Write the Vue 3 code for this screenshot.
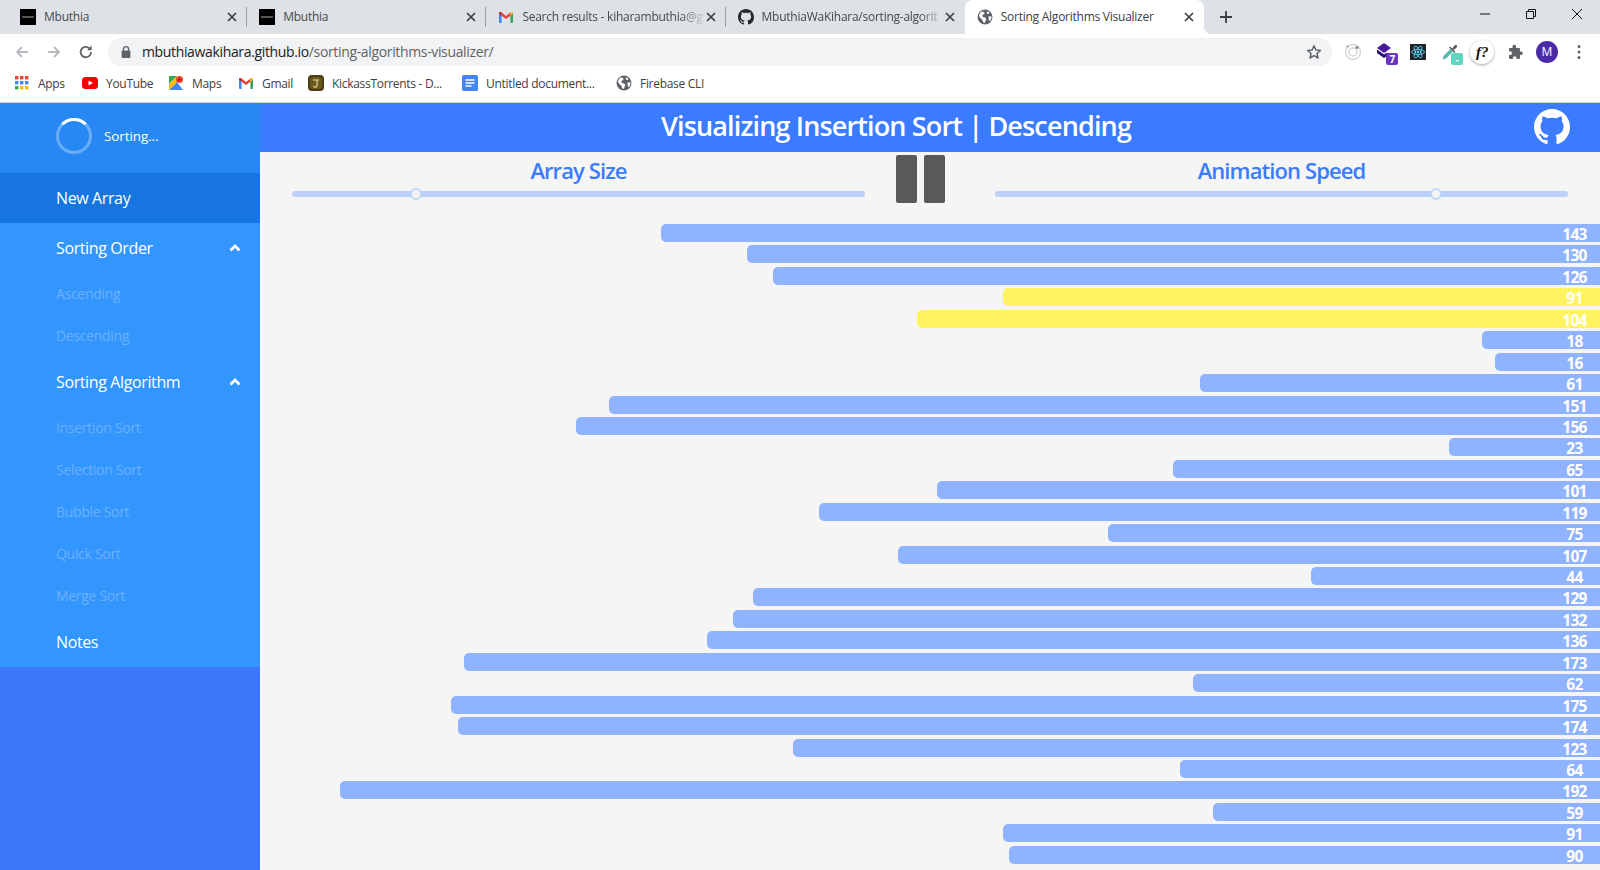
<script setup>
const values = [143,130,126,91,104,18,16,61,151,156,23,65,101,119,75,107,44,129,132,136,173,62,175,174,123,64,192,59,91,90]
const bars = values.map((value, i) => ({ value, active: i === 3 || i === 4, width: value * 6.565 + 'px' }))
const orders = ['Ascending', 'Descending']
const algorithms = ['Insertion Sort', 'Selection Sort', 'Bubble Sort', 'Quick Sort', 'Merge Sort']
const octicon = 'M8 0C3.58 0 0 3.58 0 8c0 3.54 2.29 6.53 5.47 7.59.4.07.55-.17.55-.38 0-.19-.01-.82-.01-1.49-2.01.37-2.53-.49-2.69-.94-.09-.23-.48-.94-.82-1.13-.28-.15-.68-.52-.01-.53.63-.01 1.08.58 1.23.82.72 1.21 1.87.87 2.33.66.07-.52.28-.87.51-1.07-1.78-.2-3.64-.89-3.64-3.95 0-.87.31-1.59.82-2.15-.08-.2-.36-1.02.08-2.12 0 0 .67-.21 2.2.82.64-.18 1.32-.27 2-.27.68 0 1.36.09 2 .27 1.53-1.04 2.2-.82 2.2-.82.44 1.1.16 1.92.08 2.12.51.56.82 1.27.82 2.15 0 3.07-1.87 3.75-3.65 3.95.29.25.54.73.54 1.48 0 1.07-.01 1.93-.01 2.2 0 .21.15.46.55.38A8.013 8.013 0 0016 8c0-4.42-3.58-8-8-8z'
const appDots = [['#ea4335',0,0],['#ea4335',5,0],['#ea4335',10,0],['#4285f4',0,5],['#4285f4',5,5],['#4285f4',10,5],['#34a853',0,10],['#fbbc04',5,10],['#fbbc04',10,10]]
</script>

<template>
  <div class="window">
    <div class="tabstrip">
      <div class="tab">
        <span class="mfav"><i></i></span>
        <span class="tab-title">Mbuthia</span>
        <svg class="tab-x" viewBox="0 0 10 10"><path d="M1 1l8 8M9 1L1 9" stroke="#3c4043" stroke-width="1.700"/></svg>
      </div>
      <div class="tab">
        <span class="mfav"><i></i></span>
        <span class="tab-title">Mbuthia</span>
        <svg class="tab-x" viewBox="0 0 10 10"><path d="M1 1l8 8M9 1L1 9" stroke="#3c4043" stroke-width="1.700"/></svg>
      </div>
      <div class="tab">
        <svg class="fav" viewBox="0 0 16 16"><path fill="#4285f4" d="M1 3.5h2.6V14H2a1 1 0 0 1-1-1z"/><path fill="#34a853" d="M12.4 3.5H15V13a1 1 0 0 1-1 1h-1.6z"/><path fill="#ea4335" d="M3.6 3.5 8 7l4.4-3.5v3.2L8 10.1 3.6 6.7z"/><path fill="#c5221f" d="M1 4.4C1 3 2.6 2.3 3.6 3.5v3.2L1 4.8z"/><path fill="#fbbc04" d="M15 4.4c0-1.4-1.6-2.1-2.6-.9v3.2L15 4.8z"/></svg>
        <span class="tab-title fade">Search results - kiharambuthia@g</span>
        <svg class="tab-x" viewBox="0 0 10 10"><path d="M1 1l8 8M9 1L1 9" stroke="#3c4043" stroke-width="1.700"/></svg>
      </div>
      <div class="tab last">
        <svg class="fav" viewBox="0 0 16 16"><path fill="#24292e" :d="octicon"/></svg>
        <span class="tab-title fade">MbuthiaWaKihara/sorting-algorit</span>
        <svg class="tab-x" viewBox="0 0 10 10"><path d="M1 1l8 8M9 1L1 9" stroke="#3c4043" stroke-width="1.700"/></svg>
      </div>
      <div class="tab active">
        <svg class="fav" viewBox="0 0 16 16"><circle cx="8" cy="8" r="7.5" fill="#5f6368"/><path fill="#fff" d="M5 2.2 7.6 3.4 7 5.2 5.2 6 6 8.2l2.2.3 1 1.5-1.2 3.4-1.5.4L5.4 11 3 8.6 1.8 6.8C2.4 4.8 3.6 3 5 2.2zM10.2 2l2.4 2-1.2 1-1.6-.6zM11.4 7.6l3-.4c.2 1.8-.4 3.6-1.6 5l-1-1.4z"/></svg>
        <span class="tab-title">Sorting Algorithms Visualizer</span>
        <svg class="tab-x" viewBox="0 0 10 10"><path d="M1 1l8 8M9 1L1 9" stroke="#3c4043" stroke-width="1.700"/></svg>
      </div>
      <span class="plus">
        <svg viewBox="0 0 14 14" width="14" height="14"><path d="M7 1v12M1 7h12" stroke="#3c4043" stroke-width="1.8"/></svg>
      </span>
      <div class="winbtns">
        <svg viewBox="0 0 12 12" width="12" height="12"><path d="M1 6h10" stroke="#111" stroke-width="1"/></svg>
        <svg viewBox="0 0 12 12" width="12" height="12"><path d="M1.5 3.5h7v7h-7zM3.5 3.5v-2h7v7h-2" fill="none" stroke="#111" stroke-width="1"/></svg>
        <svg viewBox="0 0 12 12" width="12" height="12"><path d="M1 1l10 10M11 1L1 11" stroke="#111" stroke-width="1"/></svg>
      </div>
    </div>

    <div class="toolbar">
      <svg class="nav" viewBox="0 0 16 16"><path d="M14 8H3M8 3 3 8l5 5" fill="none" stroke="#b6b9bd" stroke-width="1.8"/></svg>
      <svg class="nav" viewBox="0 0 16 16"><path d="M2 8h11M8 3l5 5-5 5" fill="none" stroke="#b6b9bd" stroke-width="1.8"/></svg>
      <svg class="nav" viewBox="0 0 16 16"><path d="M13 8a5.2 5.2 0 1 1-1.6-3.7" fill="none" stroke="#5f6368" stroke-width="1.8"/><path d="M13.6 1.6v4.6H9z" fill="#5f6368"/></svg>
      <div class="omnibox">
        <svg class="lock" viewBox="0 0 12 14"><path d="M3.4 6V4.2a2.6 2.6 0 0 1 5.2 0V6" fill="none" stroke="#5f6368" stroke-width="1.4"/><rect x="1.6" y="5.6" width="8.8" height="7.4" rx="1" fill="#5f6368"/></svg>
        <span class="url"><b>mbuthiawakihara.github.io</b>/sorting-algorithms-visualizer/</span>
        <svg class="star" viewBox="0 0 16 16"><path d="M8 1.8 9.9 6l4.5.5-3.4 3 1 4.5L8 11.6 4 14l1-4.5-3.4-3L6.100 6z" fill="none" stroke="#5f6368" stroke-width="1.5" stroke-linejoin="round"/></svg>
      </div>
      <div class="exts">
        <span class="ext">
          <svg viewBox="0 0 18 18" width="18" height="18"><circle cx="9" cy="9" r="7.5" fill="none" stroke="#d5d5d5" stroke-width="1.4"/><circle cx="9" cy="9" r="4" fill="none" stroke="#d5d5d5" stroke-width="1.4"/><circle cx="13" cy="4.500" r="1.600" fill="#888"/><circle cx="3.500" cy="3.500" r="1.200" fill="#aaa"/></svg>
        </span>
        <span class="ext">
          <svg viewBox="0 0 18 18" width="18" height="18"><path d="M8 0 15 5 8 10 1 5z" fill="#4a1a9e"/><path d="M1 6.500 8 11.500 11 9.500V13L8 15 1 10z" fill="#2a0a78"/></svg>
          <span class="badge purple">7</span>
        </span>
        <span class="ext">
          <svg viewBox="0 0 16 16" width="16" height="16"><rect width="16" height="16" fill="#20232a"/><g fill="none" stroke="#61dafb" stroke-width=".8"><ellipse cx="8" cy="8" rx="6.500" ry="2.500"/><ellipse cx="8" cy="8" rx="6.500" ry="2.500" transform="rotate(60 8 8)"/><ellipse cx="8" cy="8" rx="6.500" ry="2.500" transform="rotate(120 8 8)"/></g><circle cx="8" cy="8" r="1.300" fill="#61dafb"/></svg>
        </span>
        <span class="ext">
          <svg viewBox="0 0 18 18" width="18" height="18"><path d="M1.500 16.500 2.500 13 9.500 6l2.500 2.500L5 15.500z" fill="#58b8a8"/><path d="M9 3.500 14.500 9 13.500 10 12 8.500 9.500 6 8 4.500zM11 5.500 14 2a1.500 1.500 0 0 1 2 2l-3 3z" fill="#5a5f65"/></svg>
          <span class="badge teal">-</span>
        </span>
        <span class="ext fq"><span>f?</span></span>
        <span class="ext">
          <svg viewBox="0 0 16 16" width="16" height="16"><path fill="#5f6368" d="M5.500 2.500a1.800 1.800 0 0 1 3.600 0V4H12a1 1 0 0 1 1 1v2.500h1a1.800 1.800 0 0 1 0 3.600h-1V14a1 1 0 0 1-1 1H9.500v-1a1.800 1.800 0 0 0-3.600 0v1H3a1 1 0 0 1-1-1v-2.900h1a1.900 1.900 0 0 0 0-3.800H2V5a1 1 0 0 1 1-1h2.500z"/></svg>
        </span>
        <span class="ext"><span class="avatar">M</span></span>
        <span class="ext">
          <svg viewBox="0 0 4 16" width="4" height="16"><circle cx="2" cy="2.500" r="1.500" fill="#5f6368"/><circle cx="2" cy="8" r="1.500" fill="#5f6368"/><circle cx="2" cy="13.500" r="1.500" fill="#5f6368"/></svg>
        </span>
      </div>
    </div>

    <div class="bookmarks">
      <span class="bm">
        <svg class="bmi apps" viewBox="0 0 14 14"><rect v-for="d in appDots" :key="d[1] + '-' + d[2]" :x="d[1]" :y="d[2]" width="3.400" height="3.400" :fill="d[0]"/></svg>Apps
      </span>
      <span class="bm">
        <svg class="bmi" viewBox="0 0 16 16"><rect y="2" width="16" height="12" rx="3.500" fill="#f00"/><path d="M6.500 5.500 11 8l-4.500 2.500z" fill="#fff"/></svg>YouTube
      </span>
      <span class="bm">
        <svg class="bmi" viewBox="0 0 16 16"><path fill="#34a853" d="M1 1h8L1 9z"/><path fill="#4285f4" d="M1 15 9 7l6 8z"/><path fill="#fbbc04" d="M1 9 9 1v6l-8 8z"/><circle cx="11.500" cy="4.500" r="3.500" fill="#ea4335"/><circle cx="11.500" cy="4.500" r="1.200" fill="#a50e0e"/></svg>Maps
      </span>
      <span class="bm">
        <svg class="bmi" viewBox="0 0 16 16"><path fill="#4285f4" d="M1 3.500h2.600V14H2a1 1 0 0 1-1-1z"/><path fill="#34a853" d="M12.400 3.500H15V13a1 1 0 0 1-1 1h-1.600z"/><path fill="#ea4335" d="M3.600 3.500 8 7l4.400-3.500v3.200L8 10.100 3.600 6.700z"/><path fill="#c5221f" d="M1 4.400C1 3 2.600 2.300 3.600 3.500v3.200L1 4.800z"/><path fill="#fbbc04" d="M15 4.400c0-1.400-1.600-2.100-2.600-.9v3.200L15 4.800z"/></svg>Gmail
      </span>
      <span class="bm">
        <svg class="bmi" viewBox="0 0 16 16"><rect width="16" height="16" rx="4" fill="#4a3c12"/><rect x="2" y="2" width="12" height="12" rx="3" fill="#6b5a1e"/><path d="M5 5h6M9 5v6c0 1.500-3 1.500-3.500 0" fill="none" stroke="#e4d69a" stroke-width="1.200"/></svg>KickassTorrents - D...
      </span>
      <span class="bm">
        <svg class="bmi" viewBox="0 0 16 16"><rect width="16" height="16" rx="1.800" x="0" fill="#4285f4"/><path d="M3.500 5h9M3.500 8h9M3.500 11h6" stroke="#fff" stroke-width="1.400"/></svg>Untitled document...
      </span>
      <span class="bm">
        <svg class="bmi" viewBox="0 0 16 16"><circle cx="8" cy="8" r="7.500" fill="#5f6368"/><path fill="#fff" d="M5 2.200 7.600 3.400 7 5.200 5.200 6 6 8.200l2.200.3 1 1.500-1.200 3.400-1.500.4L5.400 11 3 8.600 1.800 6.800C2.400 4.800 3.600 3 5 2.200zM10.200 2l2.400 2-1.200 1-1.600-.6zM11.400 7.600l3-.4c.2 1.800-.4 3.600-1.600 5l-1-1.400z"/></svg>Firebase CLI
      </span>
    </div>

    <div class="page">
      <aside class="sidebar">
        <div class="status">
          <svg class="spinner" viewBox="0 0 36 36"><circle cx="18" cy="18" r="16.500" fill="none" stroke="rgba(255,255,255,.3)" stroke-width="3"/><path d="M6.300 6.300A16.500 16.500 0 0 1 29.700 6.300" fill="none" stroke="#fff" stroke-width="3"/></svg>
          <span>Sorting...</span>
        </div>
        <div class="item new">New Array</div>
        <div class="item head">
          <span>Sorting Order</span>
          <svg class="chev" viewBox="0 0 12 8"><path d="M1.500 6.500 6 2l4.500 4.500" fill="none" stroke="#fff" stroke-width="2.800"/></svg>
        </div>
        <div v-for="o in orders" :key="o" class="sub">{{ o }}</div>
        <div class="item head">
          <span>Sorting Algorithm</span>
          <svg class="chev" viewBox="0 0 12 8"><path d="M1.500 6.500 6 2l4.500 4.500" fill="none" stroke="#fff" stroke-width="2.800"/></svg>
        </div>
        <div v-for="a in algorithms" :key="a" class="sub">{{ a }}</div>
        <div class="item head">Notes</div>
      </aside>

      <main class="main">
        <header class="banner">
          <h1>Visualizing Insertion Sort | Descending</h1>
          <svg class="gh" viewBox="0 0 16 16"><path fill="#fff" :d="octicon"/></svg>
        </header>
        <section class="controls">
          <div class="control">
            <div class="label">Array Size</div>
            <div class="track"><span class="thumb left-thumb"></span></div>
          </div>
          <div class="pause"><span></span><span></span></div>
          <div class="control">
            <div class="label">Animation Speed</div>
            <div class="track"><span class="thumb right-thumb"></span></div>
          </div>
        </section>
        <section class="bars">
          <div v-for="(b, i) in bars" :key="i" class="bar" :class="{ active: b.active }" :style="{ width: b.width }">
            <span>{{ b.value }}</span>
          </div>
        </section>
      </main>
    </div>
  </div>
</template>

<style>
html, body { margin: 0; overflow: hidden; background: #fff; }
</style>

<style scoped>
.window { width: 1600px; height: 870px; overflow: hidden; display: flex; flex-direction: column; font-family: "Open Sans", "Noto Sans", sans-serif; }

.tabstrip { height: 34px; background: #dee1e6; display: flex; padding-left: 8px; box-sizing: border-box; flex: none; }
.tab { width: 239.2px; box-sizing: border-box; display: flex; align-items: center; padding: 0 10px 0 12px; position: relative; font-size: 12px; letter-spacing: -.25px; color: #45494e; height: 34px; }
.tab::after { content: ""; position: absolute; right: 0; top: 7px; height: 20px; width: 1px; background: #9ca0a6; }
.tab.last::after, .tab.active::after { display: none; }
.tab.active { background: #fff; border-radius: 8px 8px 0 0; color: #3c4043; }
.tab.active::before { content: ""; position: absolute; right: -8px; bottom: 0; width: 8px; height: 8px; background: radial-gradient(circle at 100% 0, transparent 8px, #fff 8.5px); }
.mfav { width: 16px; height: 16px; background: #000; flex: none; display: flex; align-items: center; justify-content: center; }
.mfav i { width: 12px; height: 2px; background: #555; display: block; }
.fav { width: 16px; height: 16px; flex: none; }
.tab-title { flex: 1; margin-left: 8px; white-space: nowrap; overflow: hidden; padding-bottom: 2px; }
.fade { -webkit-mask-image: linear-gradient(90deg, #000 86%, transparent 100%); mask-image: linear-gradient(90deg, #000 86%, transparent 100%); }
.tab-x { width: 10px; height: 10px; flex: none; }
.plus { margin-left: 15px; display: flex; align-items: center; height: 34px; }
.winbtns { margin-left: auto; display: flex; gap: 34px; padding: 2px 17px 0 0; align-items: flex-start; height: 20px; margin-top: 6px; }

.toolbar { height: 32px; box-sizing: border-box; padding: 4px 0 0; background: #fff; display: flex; align-items: flex-start; flex: none; }
.nav { width: 16px; height: 16px; margin: 6px 0 0 14px; flex: none; }
.nav + .nav { margin-left: 16px; }
.nav + .nav + .nav { margin-left: 16px; }
.omnibox { margin-left: 14px; width: 1224px; height: 28px; border-radius: 14px; background: #f1f3f4; display: flex; align-items: center; padding-left: 12px; box-sizing: border-box; flex: none; }
.lock { width: 12px; height: 14px; flex: none; }
.url { font-size: 14px; letter-spacing: -.35px; color: #5f6368; margin-left: 10px; flex: 1; white-space: nowrap; padding-bottom: 2px; }
.url b { font-weight: 400; color: #202124; }
.star { width: 16px; height: 16px; margin-right: 10px; flex: none; }
.exts { display: grid; grid-template-columns: repeat(8, 32.3px); margin-left: 5px; height: 28px; align-items: center; justify-items: center; }
.ext { position: relative; display: flex; align-items: center; justify-content: center; width: 26px; height: 26px; }
.badge { position: absolute; left: 14px; top: 14px; width: 12px; height: 12px; border-radius: 2px; font-size: 10px; line-height: 12px; text-align: center; color: #fff; font-weight: 700; }
.purple { background: #6a35c2; }
.teal { background: #5cd6c0; }
.fq span { width: 24px; height: 24px; border-radius: 50%; background: #fff; box-shadow: 0 1px 3px rgba(0,0,0,.35); font: italic 700 15px/24px "Liberation Serif", serif; text-align: center; color: #111; display: block; }
.avatar { width: 22px; height: 22px; border-radius: 50%; background: #4b2aa5; color: #fff; font-size: 12px; line-height: 22px; text-align: center; display: block; }

.bookmarks { height: 37px; box-sizing: border-box; padding: 0 0 2px 15px; background: #fff; border-bottom: 1px solid #d4d4d4; display: grid; grid-template-columns: 67px 86px 70px 70px 154px 154px 100px; align-items: center; flex: none; font-size: 12px; letter-spacing: -.3px; color: #3c4043; }
.bm { display: flex; align-items: center; white-space: nowrap; }
.bmi { width: 16px; height: 16px; margin-right: 8px; flex: none; }
.bmi.apps { width: 14px; height: 14px; margin-right: 9px; }

.page { flex: 1; display: flex; min-height: 0; background: #f5f5f5; }
.sidebar { width: 260px; flex: none; background: #3b78fb; color: #fff; }
.status { height: 70px; background: #2788f4; display: flex; align-items: center; padding-left: 56px; padding-bottom: 4px; box-sizing: border-box; font-size: 13.5px; letter-spacing: -.1px; }
.spinner { width: 36px; height: 36px; margin-right: 12px; }
.item { height: 50px; padding: 0 19px 0 56px; box-sizing: border-box; display: flex; align-items: center; background: #3396ff; font-size: 16px; letter-spacing: -.38px; }
.item.new { background: #1775e0; }
.head { justify-content: space-between; }
.chev { width: 12px; height: 8px; }
.sub { height: 42px; line-height: 42px; padding-left: 56px; background: #3396ff; color: #6bb1ff; font-size: 14px; letter-spacing: -.3px; }

.main { flex: 1; min-width: 0; }
.banner { height: 49px; background: #3b7bff; position: relative; display: flex; align-items: center; justify-content: center; padding: 0 68px 4px 0; box-sizing: border-box; }
.banner h1 { margin: 0; font-size: 27px; font-weight: 600; color: #fff; letter-spacing: -.85px; white-space: nowrap; }
.gh { position: absolute; right: 30px; top: 6px; width: 36px; height: 36px; }
.controls { height: 72px; box-sizing: border-box; padding: 0 32px; display: grid; grid-template-columns: 573px 130px 573px; }
.control { display: flex; flex-direction: column; align-items: stretch; }
.label { height: 39px; line-height: 36px; text-align: center; color: #3b7bff; font-size: 22px; font-weight: 600; letter-spacing: -.9px; }
.track { height: 6px; border-radius: 3px; background: #bdd0f8; position: relative; }
.thumb { position: absolute; top: -3px; margin-left: -6px; width: 12px; height: 12px; box-sizing: border-box; border-radius: 50%; background: #f5f5f5; border: 2px solid #bcd8fb; }
.left-thumb { left: 21.6%; }
.right-thumb { left: 77%; }
.pause { display: flex; gap: 7px; padding: 3px 0 0 31px; height: 48px; }
.pause span { width: 21px; height: 48px; border-radius: 2px; background: #595959; }

.bars { display: flex; flex-direction: column; align-items: flex-end; gap: 3.45px; }
.bar { height: 18px; background: #90b3ff; border-radius: 5px 0 0 5px; display: flex; justify-content: flex-end; flex: none; }
.bar.active { background: #fff35f; }
.bar span { width: 51px; text-align: center; line-height: 21px; color: #fff; font-weight: 700; font-size: 15.5px; letter-spacing: -.7px; }
</style>
